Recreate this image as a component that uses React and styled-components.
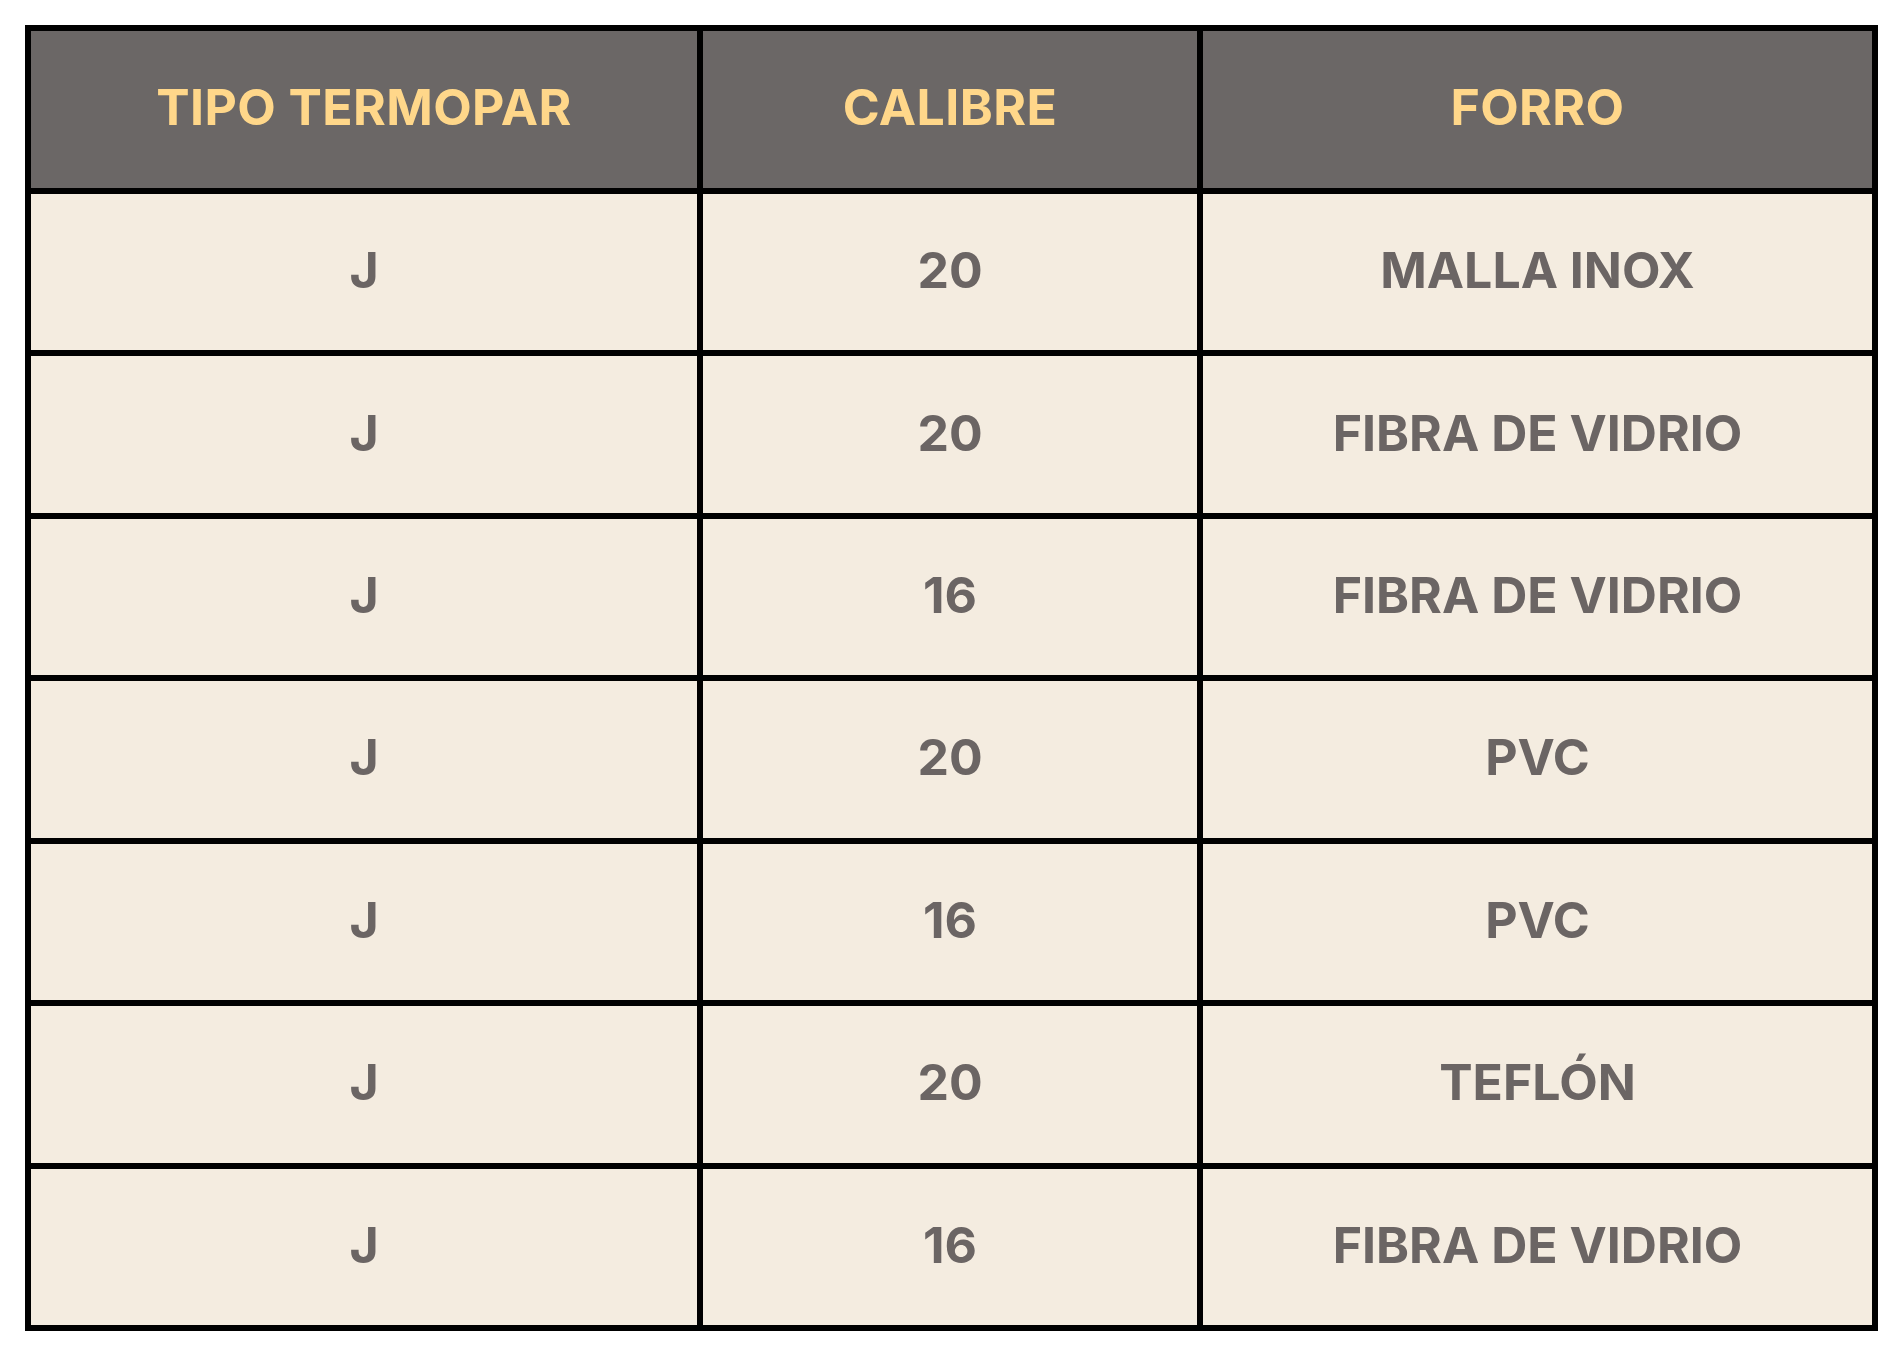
import React from 'react';
import styled, { createGlobalStyle } from 'styled-components';

const GlobalStyle = createGlobalStyle`
  html, body {
    margin: 0;
    padding: 0;
    background: #ffffff;
  }
  body {
    font-family: Inter, "Liberation Sans", sans-serif;
  }
`;

const Page = styled.div`
  padding: 25px;
`;

const Table = styled.table`
  width: 1853px;
  height: 1306px;
  table-layout: fixed;
  border-collapse: separate;
  border-spacing: 6px;
  background: #000000;
`;

const Col = styled.col`
  width: ${(p) => p.$w}px;
`;

const HeadCell = styled.th`
  height: 152px;
  padding: 0 0 5px;
  background: #6b6766;
  color: #ffd78a;
  font-family: Inter, "Liberation Sans", sans-serif;
  font-weight: 700;
  font-size: 50px;
  letter-spacing: 0.4px;
  text-align: center;
  vertical-align: middle;
`;

const Cell = styled.td`
  height: 152px;
  padding: 0 0 4px;
  background: #f4ece0;
  color: #6b6564;
  font-family: Inter, "Liberation Sans", sans-serif;
  font-weight: 700;
  font-size: 50px;
  letter-spacing: 0;
  text-align: center;
  vertical-align: middle;
`;

const rows = [
  ['J', '20', 'MALLA INOX'],
  ['J', '20', 'FIBRA DE VIDRIO'],
  ['J', '16', 'FIBRA DE VIDRIO'],
  ['J', '20', 'PVC'],
  ['J', '16', 'PVC'],
  ['J', '20', 'TEFLÓN'],
  ['J', '16', 'FIBRA DE VIDRIO'],
];

export default function App() {
  return (
    <Page>
      <GlobalStyle />
      <Table>
        <colgroup>
          <Col $w={666} />
          <Col $w={494} />
          <Col $w={669} />
        </colgroup>
        <thead>
          <tr>
            <HeadCell>TIPO TERMOPAR</HeadCell>
            <HeadCell>CALIBRE</HeadCell>
            <HeadCell>FORRO</HeadCell>
          </tr>
        </thead>
        <tbody>
          {rows.map((r, i) => (
            <tr key={i}>
              {r.map((c, j) => (
                <Cell key={j}>{c}</Cell>
              ))}
            </tr>
          ))}
        </tbody>
      </Table>
    </Page>
  );
}
